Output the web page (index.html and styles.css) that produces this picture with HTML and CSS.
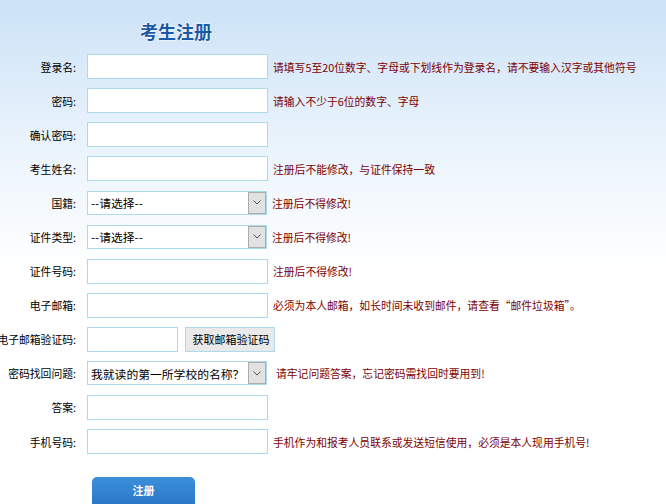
FILE: index.html
```html
<!DOCTYPE html>
<html lang="zh-CN">
<head>
<meta charset="utf-8">
<title>考生注册</title>
<link rel="stylesheet" href="styles.css">
</head>
<body>
<div class="page">
  <h1 class="title">考生注册</h1>
  <div class="form">
    <label class="label">登录名:</label>
    <div class="field"><input class="input" type="text"><span class="hint">请填写5至20位数字、字母或下划线作为登录名，请不要输入汉字或其他符号</span></div>

    <label class="label">密码:</label>
    <div class="field"><input class="input" type="password"><span class="hint">请输入不少于6位的数字、字母</span></div>

    <label class="label">确认密码:</label>
    <div class="field"><input class="input" type="password"></div>

    <label class="label">考生姓名:</label>
    <div class="field"><input class="input" type="text"><span class="hint">注册后不能修改，与证件保持一致</span></div>

    <label class="label">国籍:</label>
    <div class="field"><div class="select"><span class="select-text">--请选择--</span><span class="arrow"><svg width="8" height="5" viewBox="0 0 8 5"><path d="M0.5 0.5 L4 4 L7.5 0.5" fill="none" stroke="#555" stroke-width="1"/></svg></span></div><span class="hint">注册后不得修改!</span></div>

    <label class="label">证件类型:</label>
    <div class="field"><div class="select"><span class="select-text">--请选择--</span><span class="arrow"><svg width="8" height="5" viewBox="0 0 8 5"><path d="M0.5 0.5 L4 4 L7.5 0.5" fill="none" stroke="#555" stroke-width="1"/></svg></span></div><span class="hint">注册后不得修改!</span></div>

    <label class="label">证件号码:</label>
    <div class="field"><input class="input" type="text"><span class="hint">注册后不得修改!</span></div>

    <label class="label">电子邮箱:</label>
    <div class="field"><input class="input" type="text"><span class="hint">必须为本人邮箱，如长时间未收到邮件，请查看“邮件垃圾箱”。</span></div>

    <label class="label">电子邮箱验证码:</label>
    <div class="field field-code"><input class="input input-short" type="text"><button class="code-btn" type="button">获取邮箱验证码</button></div>

    <label class="label">密码找回问题:</label>
    <div class="field"><div class="select"><span class="select-text">我就读的第一所学校的名称？</span><span class="arrow"><svg width="8" height="5" viewBox="0 0 8 5"><path d="M0.5 0.5 L4 4 L7.5 0.5" fill="none" stroke="#555" stroke-width="1"/></svg></span></div><span class="hint hint-wide">请牢记问题答案，忘记密码需找回时要用到!</span></div>

    <label class="label">答案:</label>
    <div class="field"><input class="input" type="text"></div>

    <label class="label">手机号码:</label>
    <div class="field"><input class="input" type="text"><span class="hint">手机作为和报考人员联系或发送短信使用，必须是本人现用手机号!</span></div>
  </div>
  <div class="actions">
    <button class="submit" type="button">注册</button>
  </div>
</div>
</body>
</html>
```
FILE: styles.css
```css
html, body {
  margin: 0;
  padding: 0;
}
body {
  width: 666px;
  height: 504px;
  overflow: hidden;
  background: linear-gradient(#cce2f7 0px, #e9f3fc 140px, #ffffff 270px);
  font-family: "Noto Sans CJK SC", "Microsoft YaHei", sans-serif;
  font-size: 10.8px;
  color: #000;
}
.page {
  padding-top: 17px;
}
.title {
  width: 352px;
  margin: 0;
  text-align: center;
  font-size: 18px;
  line-height: 28px;
  font-weight: bold;
  color: #1b58a6;
  text-shadow: 0 0 2px #fff, 0 0 2px #fff, 0 0 1px #fff;
}
.form {
  margin-top: 9px;
  display: grid;
  grid-template-columns: 76px auto;
  grid-auto-rows: 25px;
  column-gap: 11px;
  row-gap: 9.1px;
}
.label {
  display: flex;
  justify-content: flex-end;
  align-items: center;
  white-space: nowrap;
}
.field {
  display: flex;
  align-items: center;
  gap: 5px;
  white-space: nowrap;
}
.input {
  box-sizing: border-box;
  width: 181px;
  height: 25px;
  margin: 0;
  border: 1px solid #abdbea;
  background: #fff;
  outline: none;
}
.input-short {
  width: 91px;
}
.field-code {
  gap: 7px;
}
.code-btn {
  box-sizing: border-box;
  height: 25px;
  width: 90px;
  margin: 0;
  padding: 0 0 0 2px;
  border: 1px solid #abdbea;
  background: #e9e9e9;
  font-family: inherit;
  font-size: 11px;
  color: #000;
}
.hint {
  color: #7d0000;
}
.hint-wide {
  margin-left: 4px;
}
.select {
  box-sizing: border-box;
  width: 180px;
  height: 24px;
  border: 1px solid #abdbea;
  background: #fff;
  display: flex;
  align-items: stretch;
}
.select-text {
  flex: 1;
  display: flex;
  align-items: center;
  padding-left: 3px;
  font-size: 11.8px;
  overflow: hidden;
}
.arrow {
  box-sizing: border-box;
  width: 18px;
  border: 1px solid #adadad;
  background: #e1e1e1;
  display: flex;
  align-items: center;
  justify-content: center;
}
.actions {
  margin-top: 23px;
  padding-left: 92px;
}
.submit {
  width: 103px;
  height: 36px;
  border: none;
  border-radius: 5px;
  background: linear-gradient(#3b8fda, #2571c1);
  color: #fff;
  font-family: inherit;
  font-size: 11px;
  font-weight: bold;
  padding: 0 0 10px 0;
}
```
